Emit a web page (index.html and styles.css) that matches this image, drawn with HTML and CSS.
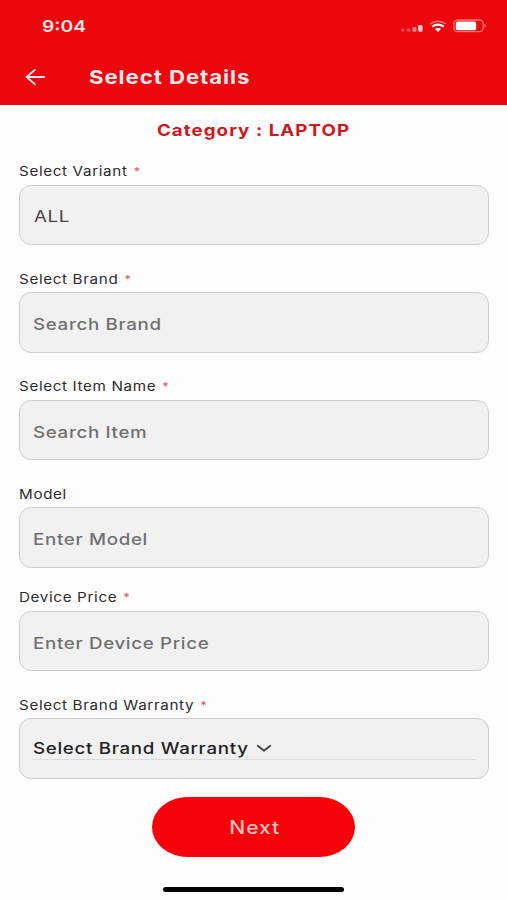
FILE: index.html
```html
<!DOCTYPE html>
<html lang="en">
<head>
<meta charset="utf-8">
<title>Select Details</title>
<link rel="stylesheet" href="styles.css">
</head>
<body>
<div class="screen">
  <header class="header">
    <div class="status">
      <span class="time wide">9:04</span>
      <svg class="status-icons" width="88" height="16" viewBox="0 0 88 16" fill="none">
        <g fill="#fff"><rect x="2" y="9.4" width="3.5" height="3.2" rx="1" opacity=".3"/><rect x="7.5" y="9.4" width="4" height="3.2" rx="1" opacity=".3"/><rect x="13.5" y="7.9" width="4" height="4.9" rx="1" opacity=".5"/><rect x="19.2" y="6" width="4.3" height="6.8" rx="1" opacity=".8"/></g>
        <path d="M31 5Q39-.4 47 5" stroke="#fff" stroke-width="1.5" opacity=".45"/>
        <path d="M33.3 7.6Q39 3.6 44.7 7.6" stroke="#fff" stroke-width="2.3"/>
        <path d="M36 10Q39 8 42 10L39 13Z" fill="#fff"/>
        <rect x="54.8" y="1" width="29.4" height="11.6" rx="3.8" stroke="#fff" stroke-width="1.3" opacity=".45"/>
        <rect x="56.8" y="2.4" width="20.4" height="8.8" rx="2" fill="#fff"/>
        <path d="M85.5 5v4q1.2-.5 1.2-2t-1.2-2" fill="#fff" opacity=".55"/>
      </svg>
    </div>
    <div class="bar">
      <svg class="back" width="22" height="18" viewBox="0 0 22 18" fill="none" stroke="#fff" stroke-width="1.8" stroke-linecap="round" stroke-linejoin="round"><path d="M19.2 9H1.6M10 1.8 1.6 9 10 16.2"/></svg>
      <h1 class="title wide">Select Details</h1>
    </div>
  </header>
  <main class="form">
    <div class="category"><span class="wide">Category : LAPTOP</span></div>
    <div class="field">
      <div class="label"><span class="wide">Select Variant <i>*</i></span></div>
      <div class="box value"><span class="wide">ALL</span></div>
    </div>
    <div class="field">
      <div class="label"><span class="wide">Select Brand <i>*</i></span></div>
      <div class="box"><span class="wide">Search Brand</span></div>
    </div>
    <div class="field">
      <div class="label"><span class="wide">Select Item Name <i>*</i></span></div>
      <div class="box"><span class="wide">Search Item</span></div>
    </div>
    <div class="field tight">
      <div class="label"><span class="wide">Model</span></div>
      <div class="box"><span class="wide">Enter Model</span></div>
    </div>
    <div class="field">
      <div class="label"><span class="wide">Device Price <i>*</i></span></div>
      <div class="box"><span class="wide">Enter Device Price</span></div>
    </div>
    <div class="field last">
      <div class="label"><span class="wide">Select Brand Warranty <i>*</i></span></div>
      <div class="box choose">
        <div class="select">
          <span class="choice wide">Select Brand Warranty</span>
          <svg class="chevron" width="16" height="9" viewBox="0 0 16 9" fill="none" stroke="#444" stroke-width="1.8" stroke-linecap="round" stroke-linejoin="round"><path d="M1.8 1.8 8 6.8 14.2 1.8"/></svg>
        </div>
      </div>
    </div>
    <button class="next"><span class="wide">Next</span></button>
  </main>
  <div class="home"></div>
</div>
</body>
</html>
```
FILE: styles.css
```css
* { box-sizing: border-box; }
body { margin: 0; font-family: Inter, "Liberation Sans", sans-serif; background: #fdfdfe; }
.screen { width: 507px; height: 900px; display: flex; flex-direction: column; overflow: hidden; }
.wide { display: inline-block; white-space: nowrap; transform: scaleX(1.17); transform-origin: left center; }
.header { height: 105px; background: #eb070b; color: #fff; flex: none; }
.status { height: 52px; display: flex; justify-content: space-between; padding: 0 20px 0 42px; align-items: center; }
.time { font-size: 16.5px; font-weight: 600; color: #ffe4e4; }
.status-icons { margin: 1px 0 0; }
.bar { display: flex; align-items: center; height: 50px; padding-left: 25px; }
.back { margin-right: 42px; opacity: .9; }
.title { margin: 2px 0 0; font-size: 19px; line-height: 24px; font-weight: 650; letter-spacing: .78px; color: #ffeaea; }
.form { padding: 0 18.5px; flex: none; }
.category { height: 56px; padding-top: 15px; text-align: center; font-size: 16px; line-height: 20px; font-weight: 650; letter-spacing: .9px; color: #d3151c; }
.category .wide { transform-origin: center; }
.field { margin-bottom: 23.5px; }
.tight { margin-bottom: 19.5px; }
.last { margin-bottom: 18.5px; }
.label { height: 23.5px; font-size: 13px; line-height: 20px; letter-spacing: .55px; color: #2c2c2c; }
.label i { font-style: normal; font-size: 11px; line-height: 1; vertical-align: 1px; margin-left: 1px; color: #e3525c; }
.box { height: 60.5px; border: 1.5px solid #d0cccc; border-radius: 12px; background: #f1f1f1; padding: 4px 12px 0 13px; display: flex; align-items: center; font-size: 16px; font-weight: 450; letter-spacing: .57px; color: #707070; }
.value { color: #444; padding: 3px 12px 0 14px; font-weight: 400; }
.choose { padding-top: 1px; }
.select { width: 100%; height: 22px; border-bottom: 1px solid #dcdcdc; display: flex; align-items: center; }
.choice { width: 223.5px; font-weight: 550; letter-spacing: .58px; color: #222; }
.next { display: flex; align-items: center; justify-content: center; width: 203px; height: 60px; margin: 0 auto; border: 0; border-radius: 36px / 30px; background: #f60208; color: #ffc2c2; font: 500 18px Inter, sans-serif; letter-spacing: .8px; }
.next .wide { transform-origin: center; margin-left: 2px; }
.home { width: 181px; height: 5px; border-radius: 3px; background: #000; margin: auto auto 8px; flex: none; }
```
